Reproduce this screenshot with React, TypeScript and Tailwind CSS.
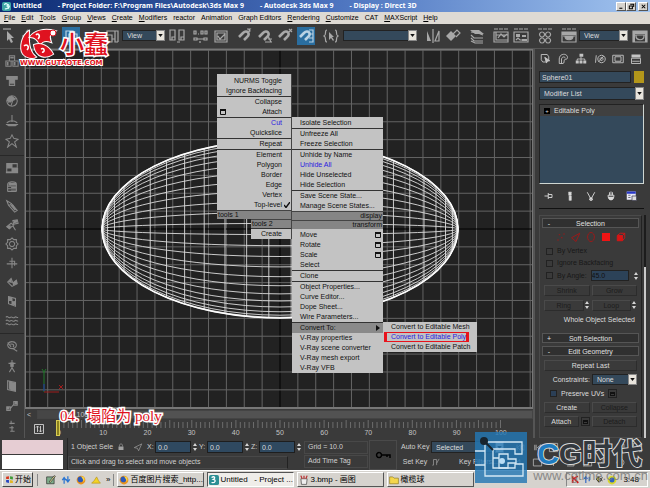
import React from 'react';
import clsx from 'clsx';

type MenuRow = { label: string; mark?: 'box' | 'check' | 'arrow'; active?: boolean; blue?: boolean; line?: boolean };

const menuBar = ['File', 'Edit', 'Tools', 'Group', 'Views', 'Create', 'Modifiers', 'reactor', 'Animation', 'Graph Editors', 'Rendering', 'Customize', 'CAT', 'MAXScript', 'Help'];
const noMnemonic = ['reactor', 'Animation', 'Graph Editors', 'CAT'];

const toolsMenu: MenuRow[] = [
  { label: 'NURMS Toggle' },
  { label: 'Ignore Backfacing' },
  { label: 'Collapse', line: true },
  { label: 'Attach', mark: 'box' },
  { label: 'Cut', line: true, blue: true },
  { label: 'Quickslice' },
  { label: 'Repeat', line: true },
  { label: 'Element', line: true },
  { label: 'Polygon' },
  { label: 'Border' },
  { label: 'Edge' },
  { label: 'Vertex' },
  { label: 'Top-level', mark: 'check' },
];

const displayMenu: MenuRow[] = [
  { label: 'Isolate Selection' },
  { label: 'Unfreeze All', line: true },
  { label: 'Freeze Selection' },
  { label: 'Unhide by Name', line: true },
  { label: 'Unhide All', blue: true },
  { label: 'Hide Unselected' },
  { label: 'Hide Selection' },
  { label: 'Save Scene State...', line: true },
  { label: 'Manage Scene States...' },
];

const transformMenu: MenuRow[] = [
  { label: 'Move', mark: 'box' },
  { label: 'Rotate', mark: 'box' },
  { label: 'Scale', mark: 'box' },
  { label: 'Select' },
  { label: 'Clone', line: true },
  { label: 'Object Properties...', line: true },
  { label: 'Curve Editor...' },
  { label: 'Dope Sheet...' },
  { label: 'Wire Parameters...' },
  { label: 'Convert To:', line: true, mark: 'arrow', active: true },
  { label: 'V-Ray properties' },
  { label: 'V-Ray scene converter' },
  { label: 'V-Ray mesh export' },
  { label: 'V-Ray VFB' },
];

// All icons are drawn in a 16 x 16 box
const Icon = ({ d, fill, thick, className = 'size-4 text-[#b4b4b4]' }: { d: string; fill?: string; thick?: string; className?: string }) => (
  <svg viewBox="0 0 16 16" className={className} fill="none" stroke="currentColor" strokeWidth="1.2" aria-hidden="true">
    <path d={d} />
    {fill && <path d={fill} fill="currentColor" stroke="none" />}
    {thick && <path d={thick} strokeWidth="2.6" />}
  </svg>
);

const dash = 'M1 1h4M6 1h4M11 1h4';
const magnet = 'M2 9l4-4c4-4 8 1 4 4l-3 3';

const Tool = ({ label, d, fill, thick, className, on }: { label: string; d: string; fill?: string; thick?: string; className?: string; on?: boolean }) => (
  <button
    aria-label={label}
    className={clsx('flex shrink-0 items-center justify-center', on ? 'h-[18px] w-[18px] bg-[#2a6ea0]' : 'h-[18px] w-4', className)}
  >
    <Icon d={d} fill={fill} thick={thick} className={on ? 'size-4 text-[#b9d2e4]' : 'size-4 text-[#a8a8a8]'} />
  </button>
);

const Dropdown = ({ label, value, className }: { label: string; value: string; className?: string }) => (
  <div className={clsx('relative shrink-0', className)}>
    <select aria-label={label} className="block h-full w-full appearance-none border border-[#222] bg-[#34495b] pl-1 text-[7px] leading-[9px] text-[#dcdcdc]">
      <option>{value}</option>
    </select>
    <span className="pointer-events-none absolute inset-y-0 right-0 flex w-[9px] items-center justify-center border border-[#888] bg-[#e8e4dc]">
      <svg viewBox="0 0 6 4" className="h-[3px] w-[5px]"><path d="M0 0h6L3 4z" fill="#111" /></svg>
    </span>
  </div>
);

const Spinner = () => (
  <svg viewBox="0 0 6 10" className="h-[10px] w-[6px] shrink-0" aria-hidden="true">
    <path d="M1 4l2-3 2 3zM1 6l2 3 2-3z" fill="#d5d5d5" />
  </svg>
);

const TitleBar = () => (
  <header className="flex h-3 items-center bg-linear-to-r from-[#0c2a72] via-[#4a71bd] to-[#a2c4ef] font-['Noto_Sans'] text-[7px] leading-3 font-bold whitespace-pre text-white">
    <svg viewBox="0 0 16 16" className="mx-0.5 size-[9px]">
      <rect width="16" height="16" rx="3" fill="#3fa5a5" />
      <path d="M4 5c3-4 8-1 5 2 4 1 2 6-4 5M11 4l2 4-2 4" stroke="#e4ffff" strokeWidth="2" fill="none" />
    </svg>
    <span>Untitled</span>
    <span className="ml-4">- Project Folder: F:\Program Files\Autodesk\3ds Max 9</span>
    <span className="ml-4">- Autodesk 3ds Max 9</span>
    <span className="ml-4">- Display : Direct 3D</span>
    <div className="mr-0.5 ml-auto flex">
      {[['Minimize', 'M3 12h7'], ['Restore', 'M5 3h8v6M3 7h7v6H3z'], ['Close', 'M4 4l8 8M12 4l-8 8']].map(([name, d], i) => (
        <button key={name} aria-label={name} className={clsx('flex h-[9px] w-[10px] items-center justify-center border border-t-white border-l-white border-r-[#555] border-b-[#555] bg-[#d6d3ce]', i === 2 && 'ml-0.5')}>
          <svg viewBox="0 0 16 16" className="size-[7px]"><path d={d} stroke="#000" strokeWidth="2.4" fill="none" /></svg>
        </button>
      ))}
    </div>
  </header>
);

const Toolbar = () => (
  <div className="flex h-[25px] items-center border-b border-[#555] bg-[#3a3a3a] pb-px pl-0.5">
    <Tool label="Select" d="M1 1h8" fill="M5 3v10l2-2 2 4 2-1-2-4h3z" />
    <Tool label="Move" className="ml-0.5" d="M8 2v12M2 8h12M6 4l2-2 2 2M6 12l2 2 2-2" />
    <Tool label="Rotate" className="ml-0.5" d="M12 4a5 5 0 1 0 1 6M12 1v4H8" />
    <Tool label="Scale" className="ml-2" on d="M3 3h7v10H3zM6 6h8v7H6z" />
    <Tool label="Use Center" className="ml-6" d="M3 6V3h11v11M1 7h7v7H1zM11 3v11h3M8 11h3" />
    <Dropdown label="Reference coordinate system" value="View" className="ml-0.5 h-[11px] w-[43px]" />
    <Tool label="Pivot center" className="ml-1" d="M1 2h5v10H1zM10 2h5v10h-5zM3 12v-3h3M8 14h3M12 12v-3h3" />
    <Tool label="Manipulate" className="ml-2" d="M1 3h2v3H1zM5 6h1M8 3h2v3H8zM12 3h2v3h-2zM1 10h3v2H1zM4 11h7M11 10h3v2h-3zM7 13v2" />
    <Tool label="Keyboard override" className="ml-1" d="M2 3h12v11H2zM4 5h8v7H4zM5 8l2 3 5-5" />
    <Tool label="Snap toggle" className="ml-2" thick={magnet} d="M10 1h3l-1 1 1 1-3 2" />
    <Tool label="Angle snap" className="ml-1" thick={magnet} d="M8 14h7M14 14l-3-6M11 11h4" />
    <Tool label="Percent snap" className="ml-1" thick={magnet} d="M12 1l3 3M15 1l-3 3" />
    <Tool label="Spinner snap" className="ml-1" on thick={magnet} d="M11 2h4v12h-4M11 6h4M11 10h4" />
    <Tool label="Named selections" className="ml-2" d="M4 2c-3 0 0 5-3 6 3 1 0 6 3 6M12 2c3 0 0 5 3 6-3 1 0 6-3 6" fill="M6 4v8l2-2 2 3 1-1-2-3h2z" />
    <Dropdown label="Named selection sets" value="" className="ml-1 h-[11px] w-[74px]" />
    <Tool label="Mirror" className="ml-2" d="M8 1v14M14 3v10h-4z" fill="M2 3l4 10H2z" />
    <Tool label="Align" className="ml-1" d="M8 6l4-4 3 3-4 4" fill="M1 8l5-5 5 5-5 5z" />
    <Tool label="Layers" className="ml-2" d="M2 4l7 1 5 2M2 7l3 3 9 0M2 10l3 3 9 0M2 13l4 2h8" fill="M1 2h9l5 4H6z" />
    <Tool label="Curve editor" className="ml-2" d={dash + 'M1 4h14v10H1zM3 4v8h12M5 10l3-4 3 3 3-3M3 7h12'} />
    <Tool label="Schematic view" className="ml-1" d={dash + 'M1 4h14v10H1zM3 12l2-2 2 2h4'} fill="M3 6h4v3H3zM9 7h4v2H9zM9 11h5v2H9z" />
    <Tool label="Material editor" className="ml-2" d={dash + 'M5 4a2.500 2.500 0 1 0 .1 0M11 4a2.500 2.500 0 1 0 .1 0M5 10a2.500 2.500 0 1 0 .1 0M11 10a2.500 2.500 0 1 0 .1 0'} />
    <Tool label="Render scene" className="ml-2" d={dash + 'M1 4h14v10H1zM4 8c0 5 8 5 8 0M2 8h12'} fill="M1 4h14v3H1zM4 8h8c0 5-8 5-8 0z" />
    <Dropdown label="Render view" value="View" className="ml-0.5 h-[11px] w-[49px]" />
    <Tool label="Quick render" className="ml-1" d="M1 3h14v11H1zM4 7h8v1c0 5-8 5-8 0zM2 7h12" fill="M1 3h14v3H1zM1 3h2v11H1zM13 3h2v11h-2z" />
  </div>
);

const sideGroups: { cls: string; icons: [string, string, string?][] }[] = [
  {
    cls: 'h-5',
    icons: [
      ['Objects', 'M5 2h6v6H5zM1 8h6v6H1zM9 8h6v6H9z', 'M6 3h4v2H6zM2 9h2v4H2zM10 9h2v4h-2z'],
      ['Cloth', 'M2 3h12v3h-3v7H5V6H2z', 'M2 3h12v3h-3v5H5V6H2z'],
      ['Deform', 'M8 2a6 6 0 1 0 .1 0M4 10c0-4 7-1 8-5M7 13l2-6', 'M8 2a6 6 0 0 0-6 6l4 2 6-5z'],
      ['Plane', 'M8 1v8M2 10c4-3 8-3 12 0M1 12h14', 'M1 12h14l-3 2H4z'],
      ['Rag doll', 'M8 1l2 4 5 1-4 3 2 6-5-4-5 4 2-6-4-3 5-1z'],
    ],
  },
  {
    cls: 'h-[19px]',
    icons: [
      ['Checker', 'M2 3h12v10H2zM8 3v10M2 8h12', 'M2 3h6v5H2zM8 8h7v6H8zM1 12h14v2H1z'],
      ['Spring', 'M3 5c0-4 10-4 10 0M3 5v8M13 5v8M3 7h10M3 10h10M3 13h10M6 3v3', 'M4 3h9v3H4zM7 8h6v1H7zM7 11h6v1H7z'],
      ['Dashpot', 'M2 2l5 3 7 8-3 2-7-8zM5 7l3-2', 'M6 7l3-1 4 6-2 1z'],
      ['Motor', 'M2 10l5-4 3 2-5 4zM9 3l5-1 1 4-5 1zM9 9l3 5', 'M2 10l4-2 1 3-2 2zM10 3l4-1 0 3-4 1z'],
      ['Wheel', 'M8 1l2 2 3 0 0 3 2 2-2 2 0 3-3 0-2 2-2-2-3 0 0-3-2-2 2-2 0-3 3 0zM8 5a3 3 0 1 0 .1 0'],
      ['Wind', 'M8 2v12M2 9h12M5 6h6v5'],
      ['Fracture', 'M3 8l4-4 2 5 4-3 1 4-6 3z', 'M3 8l4-4 1 5zM9 9l4-3 1 4-5 2z'],
      ['Flag', 'M4 3l8 2v9l-8-3zM4 6l8 3M8 4v9', 'M4 3l4 1v4l-4-2zM8 8l4 1v4l-4-1z'],
      ['Water', 'M1 5c2-3 3 2 5 0s3 2 5 0 2 1 4 0M1 9c2-3 3 2 5 0s3 2 5 0 2 1 4 0M1 13c2-3 3 2 5 0s3 2 5 0 2 1 4 0'],
    ],
  },
  {
    cls: 'h-5',
    icons: [
      ['Constraint', 'M8 3a5 4 0 1 0 .1 0M6 6c4-1 5 2 3 3M9 11l5 3M3 4l4 5'],
      ['Ragdoll', 'M8 1v3M4 5h8M8 4v6M8 10l-3 5M8 10l3 5', 'M6 4h4v5H6z'],
      ['Solver', 'M3 2l9 2v10l-9-2zM5 3v8', 'M5 3l7 1v10l-7-2z'],
      ['Preview', 'M2 9h4v4H2zM6 11l4-5M10 3h4v4h-4zM11 5h2', 'M2 9h3v3H2zM11 3h3v3h-3z'],
      ['Utilities', 'M7 2v4M5 5h6M8 8v6M5 10h5M6 14h5'],
    ],
  },
];

const SideBar = () => (
  <nav className="flex w-[25px] shrink-0 flex-col items-center border-r border-[#555] bg-[#3a3a3a] pt-0.5">
    {sideGroups.map((group, i) => (
      <div key={i} className={clsx('flex w-full flex-col items-center', i > 0 && 'mt-1 border-t border-[#282828] pt-0.5')}>
        {group.icons.map(([name, d, fill]) => (
          <button key={name} aria-label={name} className={clsx('flex items-center', group.cls)}>
            <Icon d={d} fill={fill} className="size-[14px] text-[#888]" />
          </button>
        ))}
      </div>
    ))}
  </nav>
);

// Ellipsoid wireframe: 50 segments, poles on the x axis
const CX = 254;
const CY = 179;
const RX = 178;
const RY = 89;
const STEP = Math.PI / 25;
const GRID = 17.87;

const latitudes = Array.from({ length: 24 }, (_, i) => {
  const a = (i + 1) * STEP;
  return { x: CX - RX * Math.cos(a), h: RY * Math.sin(a) };
});
const meridians = Array.from({ length: 13 }, (_, i) => RY * Math.sin(STEP / 2 + i * STEP));

const Wireframe = () => (
  <svg viewBox="0 0 506 357" preserveAspectRatio="xMidYMid slice" className="absolute inset-0 h-full w-full" fill="none">
    <g stroke="#646464">
      {Array.from({ length: 29 }, (_, i) => i - 14).map((i) => (
        <path key={'v' + i} d={`M${CX + i * GRID} 0v357`} stroke={i === 0 ? '#000' : undefined} />
      ))}
      {Array.from({ length: 20 }, (_, i) => i - 10).map((i) => (
        <path key={'h' + i} d={`M0 ${CY + i * GRID}h506`} stroke={i === 0 ? '#000' : undefined} />
      ))}
    </g>
    <g stroke="#dcdcdc" strokeWidth="0.9">
      {latitudes.map((l) => <path key={l.x} d={`M${l.x} ${CY - l.h}v${2 * l.h}`} />)}
      {meridians.map((r) => <ellipse key={r} cx={CX} cy={CY} rx={RX} ry={r} />)}
    </g>
    <ellipse cx={CX} cy={CY} rx={RX} ry={RY} stroke="#fff" strokeWidth="1.4" />
    <path d="M18 342v-20M16 319l2 3 2-3" stroke="#1f7a2a" />
    <path d="M18 342h15M33 335l4 4M37 335l-4 4" stroke="#a01c1c" />
    <path d="M18 334v7" stroke="#2233b0" />
  </svg>
);

const Mark = ({ kind }: { kind: 'box' | 'check' | 'arrow' }) => (
  <svg viewBox="0 0 6 6" className="size-[6px] shrink-0" aria-hidden="true">
    {kind === 'box' && <path d="M.5 1h5v4.500h-5z" fill="none" stroke="#111" />}
    {kind === 'box' && <path d="M0 0h6v2H0z" fill="#111" />}
    {kind === 'check' && <path d="M0 3l2 2.500L6 0" fill="none" stroke="#111" strokeWidth="1.400" />}
    {kind === 'arrow' && <path d="M1 0l4 3-4 3z" fill="#111" />}
  </svg>
);

const Rows = ({ rows, right }: { rows: MenuRow[]; right?: boolean }) => (
  <>
    {rows.map((row) => (
      <button
        key={row.label}
        role="menuitem"
        className={clsx(
          'box-content flex h-[10px] items-center text-[7px] leading-[10px] whitespace-nowrap',
          right ? 'flex-row-reverse gap-0.5 pr-px pl-[3px]' : 'pr-0.5 pl-2',
          row.line && 'border-t border-[#333]',
          row.active && 'bg-[#8a8a8a]',
          row.blue ? 'text-[#2a20e0]' : 'text-[#111]',
        )}
      >
        {right && row.mark !== 'check' && <span className="w-[6px]" />}
        {right && row.mark === 'check' && <Mark kind="check" />}
        <span className={clsx('flex-1', right ? 'text-right' : 'text-left')}>{row.label}</span>
        {row.mark && row.mark !== 'check' && <Mark kind={row.mark} />}
      </button>
    ))}
  </>
);

const quadTitle = 'h-[9px] border-t border-[#444] bg-[#858585] px-px text-[7px] leading-[8px] text-[#111]';

const QuadMenu = () => (
  <div className="absolute top-6 left-[191px] flex items-start" role="menu">
    <div className="flex w-[75px] flex-col items-end border-r border-[#444]">
      <div className="flex w-full flex-col bg-[#c3c3c3] pt-0.5">
        <Rows rows={toolsMenu} right />
        <div className={quadTitle}>tools 1</div>
      </div>
      <div className="flex w-10 flex-col bg-[#c3c3c3]">
        <div className={quadTitle}>tools 2</div>
        <Rows rows={[{ label: 'Create', line: true }]} right />
      </div>
    </div>
    <div className="mt-[43px] flex w-[91px] flex-col bg-[#c3c3c3] pt-px">
      <Rows rows={displayMenu} />
      <div className={clsx(quadTitle, 'text-right')}>display</div>
      <div className={clsx(quadTitle, 'mb-px text-right')}>transform</div>
      <Rows rows={transformMenu} />
    </div>
    <div className="mt-[248px] flex w-[94px] flex-col bg-[#c3c3c3] text-[7px] leading-[10px] text-[#111]" role="menu">
      <button role="menuitem" className="h-[10px] pl-2 text-left whitespace-nowrap">Convert to Editable Mesh</button>
      <button role="menuitem" className="mr-2 ml-px h-[10px] border-x-[3px] border-y border-[#e8131c] pl-1 text-left leading-[8px] whitespace-nowrap text-[#2a20e0]">Convert to Editable Poly</button>
      <button role="menuitem" className="h-[10px] pl-2 text-left whitespace-nowrap">Convert to Editable Patch</button>
    </div>
  </div>
);

const TimeLine = () => (
  <div className="bg-[#3a3a3a] text-[#c4c4c4]">
    <div className="flex h-3 items-center gap-1 border-t border-[#777] text-[7px]">
      <button className="w-2 text-center leading-[10px]">&lt;</button>
      <div className="h-[9px] flex-1 border border-[#444] bg-[#525252]">
        <div className="h-full w-[80px] border-r border-[#333] bg-[#464646] text-center leading-[8px]">0 / 100</div>
      </div>
    </div>
    <div className="flex h-[18px] text-[7px]">
      <button aria-label="Open mini curve editor" className="ml-2 flex w-3 items-center">
        <Icon d="M2 2h12v12H2zM6 12V4M4 6l2-2 2 2M10 4v8M8 10l2 2 2-2" className="size-3 text-[#d0d0d0]" />
      </button>
      <div className="relative ml-[14px] flex-1 pr-8">
        <span className="absolute top-0 -left-[3px] h-4 w-1 border border-[#d8cc50] bg-[#8a8120]" />
        <svg viewBox="0 0 442 8" preserveAspectRatio="none" className="h-2 w-full">
          <path d={Array.from({ length: 101 }, (_, i) => `M${i * 4.41 + 0.5} ${i % 5 ? 2 : 0}V8`).join('')} stroke="#6d6d6d" />
        </svg>
        <div className="flex justify-between leading-[9px]">
          {Array.from({ length: 11 }, (_, i) => (
            <span key={i} className="flex w-0 justify-center">{i * 10}</span>
          ))}
        </div>
      </div>
    </div>
  </div>
);

const Rollout = ({ open, children }: { open?: boolean; children: React.ReactNode }) => (
  <button className="grid h-[10px] w-full grid-cols-[12px_1fr_12px] items-center border border-[#555] bg-[#303030] text-center text-[#e0e0e0]">
    <span>{open ? '-' : '+'}</span>
    <span>{children}</span>
  </button>
);

const PanelButton = ({ children, off, className }: { children: React.ReactNode; off?: boolean; className?: string }) => (
  <button disabled={off} className={clsx('h-[11px] border border-t-[#4a4a4a] border-l-[#4a4a4a] border-r-[#2c2c2c] border-b-[#2c2c2c] text-center leading-[9px]', off ? 'text-[#1c1c1c]' : 'text-[#dcdcdc]', className)}>
    {children}
  </button>
);

const Check = ({ id, children, off, blue }: { id: string; children: React.ReactNode; off?: boolean; blue?: boolean }) => (
  <div className="flex items-center gap-1">
    <input id={id} type="checkbox" disabled={off} className={clsx('size-[7px] appearance-none border border-[#222]', blue ? 'bg-[#2b3f56]' : 'bg-[#3a3a3a]')} />
    <label htmlFor={id} className={off ? 'text-[#181818]' : 'text-[#dcdcdc]'}>{children}</label>
  </div>
);

const Square = () => (
  <button aria-label="Settings" className="flex size-[9px] items-center justify-center border border-[#222]">
    <span className="h-1 w-[5px] border border-t-2 border-[#111]" />
  </button>
);

const CommandPanel = () => (
  <aside className="flex w-[117px] shrink-0 flex-col border-l-2 border-[#555] bg-[#3a3a3a] pt-0.5 pr-1.5 pl-1 text-[7px] leading-[10px] text-[#dcdcdc]">
    <div className="flex h-4 items-center justify-between pr-0.5">
      {[
        ['Create', 'M3 2h8l2 3v5l-2 2H5L3 9zM8 6l2 7 1-3 3 0z', 'M7 5l3 9 1-3 4 0z'],
        ['Modify', 'M3 14V8c0-8 11-8 11-2 0 3-3 2-4 3s0 5-2 5zM6 14V8c1-4 5-3 5-1', ''],
        ['Hierarchy', 'M8 5v5M3 10V8h10v2', 'M6 1h5v4H6zM1 10h4v4H1zM6 10h4v4H6zM11 10h4v4h-4z'],
        ['Motion', 'M10 3a5 5 0 1 0 .1 0M10 6a2 2 0 1 0 .1 0M3 3L2 13M6 12l7-8', ''],
        ['Display', 'M1 3h14v10H1zM4 5h8v6H4z', ''],
        ['Utilities', 'M2 7h12v7H2zM3 11h10', 'M2 2h12v4H2z'],
      ].map(([name, d, fill]) => (
        <button key={name} aria-label={name}><Icon d={d} fill={fill} className="size-3 text-[#c4c4c4]" /></button>
      ))}
    </div>
    <div className="mt-1 flex items-center gap-[3px]">
      <input aria-label="Object name" defaultValue="Sphere01" className="h-3 w-0 flex-1 border border-[#222] bg-[#34495b] pl-0.5 text-[#dcdcdc]" />
      <button aria-label="Object color" className="h-3 w-[10px] bg-[#b3961a]" />
    </div>
    <Dropdown label="Modifiers" value="Modifier List" className="mt-1 h-[13px]" />
    <div className="mt-1 h-20 border border-t-[#222] border-l-[#222] border-r-[#cfd6d2] border-b-[#cfd6d2] bg-[#34495b]">
      <div className="flex h-[11px] items-center gap-1 bg-[#404040] pl-1">
        <span className="flex size-[6px] items-center justify-center bg-black text-[6px] leading-[6px]">+</span>
        Editable Poly
      </div>
    </div>
    <div className="flex h-6 items-center justify-between px-1 pr-1.5">
      {[
        ['Pin stack', 'M2 8h5M7 4v8M7 6h5v4H7', ''],
        ['Show end result', 'M7 3v11M9 6v8M6 3h4', 'M6 3h4v4H6zM7 8h3v6H7z'],
        ['Make unique', 'M3 3l5 9 5-9M6 12a2 2 0 1 0 4 0', 'M6 10h4v3H6z'],
        ['Remove modifier', 'M4 7c0 8 8 8 8 0M4 7h8M6 7V3M8 7V2M10 7V3', 'M4 9h8c0 6-8 6-8 0z'],
      ].map(([name, d, fill]) => (
        <button key={name} aria-label={name}><Icon d={d} fill={fill} className="size-3 text-[#dadada]" /></button>
      ))}
      <button aria-label="Configure sets">
        <svg viewBox="0 0 16 16" className="size-3">
          <path d="M1 2h12v11H1z" fill="#e8e8f4" />
          <path d="M1 2h12v3H1z" fill="#2636c8" />
          <path d="M8 8h6v6H8zM3 7h3M3 10h3" stroke="#445" fill="#ddd" />
        </svg>
      </button>
    </div>
    <hr className="border-[#111]" />
    <div className="-mr-0.5 mt-[6px] flex flex-1 gap-0.5">
      <div className="flex flex-1 flex-col border border-[#4a4a4a] border-r-[#222] p-0.5">
        <Rollout open>Selection</Rollout>
        <div className="mt-[3px] flex h-3 items-center justify-center gap-[3px]">
          {['M3 12h2M8 9h2M11 4h2M5 5h2', 'M2 9l11-6-5 11z', 'M8 2c6 0 6 12 0 12S2 2 8 2z'].map((d) => (
            <button key={d} aria-label="Sub-object level"><Icon d={d} className="size-3 text-[#a51515]" /></button>
          ))}
          <button aria-label="Polygon" className="mx-0.5 size-2 bg-[#f01414]" />
          <button aria-label="Element"><Icon d="M3 6l4-3h6v6l-3 4H3zM3 6h7v7M10 6l3-3" fill="M3 6h7v7H3z" className="size-3 text-[#d81414]" /></button>
        </div>
        <div className="mt-[3px] flex flex-col gap-0.5 pl-1">
          <Check id="by-vertex" off>By Vertex</Check>
          <Check id="ignore" off>Ignore Backfacing</Check>
          <div className="flex items-center gap-1">
            <Check id="by-angle" off>By Angle:</Check>
            <input aria-label="Angle" disabled defaultValue="45.0" className="h-[11px] w-0 flex-1 border border-[#222] bg-[#2c4258] text-[#111]" />
            <Spinner />
          </div>
        </div>
        <div className="mt-1 grid grid-cols-2 gap-x-0.5 gap-y-1 px-0.5">
          <PanelButton off>Shrink</PanelButton>
          <PanelButton off>Grow</PanelButton>
          <div className="flex"><PanelButton off className="flex-1">Ring</PanelButton><Spinner /></div>
          <div className="flex"><PanelButton off className="flex-1">Loop</PanelButton><Spinner /></div>
        </div>
        <p className="mt-1 pr-1 text-right">Whole Object Selected</p>
        <div className="mt-2 flex flex-col gap-[3px]">
          <Rollout>Soft Selection</Rollout>
          <Rollout open>Edit Geometry</Rollout>
        </div>
        <div className="flex flex-col gap-[3px] px-0.5 pt-1">
          <PanelButton>Repeat Last</PanelButton>
          <div className="flex items-center justify-end gap-0.5">
            <span>Constraints:</span>
            <Dropdown label="Constraints" value="None" className="h-[11px] w-[45px]" />
          </div>
          <div className="flex h-[11px] items-center gap-1 pl-1.5">
            <Check id="uvs" blue>Preserve UVs</Check>
            <Square />
          </div>
          <div className="grid grid-cols-2 gap-x-0.5 gap-y-[3px]">
            <PanelButton>Create</PanelButton>
            <PanelButton off>Collapse</PanelButton>
            <div className="flex items-center gap-0.5"><PanelButton className="flex-1">Attach</PanelButton><Square /></div>
            <PanelButton off>Detach</PanelButton>
          </div>
        </div>
      </div>
      <div className="flex w-0.5 flex-col bg-[#1c1c1c]">
        <span className="mt-[52px] flex-1 bg-[#c9c9c9]" />
      </div>
    </div>
  </aside>
);

const Coord = ({ axis }: { axis: string }) => (
  <div className="flex items-center gap-px">
    <label htmlFor={'axis-' + axis} className="w-[7px]">{axis}:</label>
    <input id={'axis-' + axis} defaultValue="0.0" className="h-3 w-[36px] border border-[#1e1e1e] bg-[#2f4960] pl-0.5 text-[#dcdcdc]" />
    <Spinner />
  </div>
);

const StatusBar = () => (
  <div className="flex h-8 bg-[#3a3a3a] text-[7px] leading-[10px] text-[#d0d0d0]">
    <div className="mt-0.5 ml-0.5 flex w-[61px] shrink-0 flex-col gap-px">
      <div className="h-[14px] bg-[#e6cdd3]" />
      <div className="h-[14px] bg-white" />
    </div>
    <div className="ml-1 flex w-[237px] shrink-0 flex-col border-l border-[#252525]">
      <div className="flex h-[18px] items-center pl-[3px]">
        <span className="whitespace-nowrap">1 Object Sele</span>
        <Icon d="M5 7V4c0-3 6-3 6 0v3" fill="M3 7h10v7H3z" className="ml-1 size-2 text-[#a0a0a0]" />
        <Icon d="M2 9l12-6-5 11-2-4z" className="mr-1 ml-2 size-[10px] text-[#999]" />
        <div className="ml-auto flex gap-px pr-0.5">
          <Coord axis="X" />
          <Coord axis="Y" />
          <Coord axis="Z" />
        </div>
      </div>
      <div className="mr-4 h-[13px] border border-[#484848] border-r-[#222] pl-0.5">Click and drag to select and move objects</div>
    </div>
    <div className="flex w-[64px] shrink-0 flex-col gap-px pt-[3px]">
      <div className="h-[13px] border border-[#484848] pl-[3px]">Grid = 10.0</div>
      <div className="h-[13px] border border-[#484848] pl-[3px]">Add Time Tag</div>
    </div>
    <button aria-label="Set keys" className="mt-0.5 ml-px flex w-7 shrink-0 items-center justify-center border border-[#4a4a4a]">
      <svg viewBox="0 0 16 8" className="h-2 w-4"><path d="M4 1.500a2.500 2.500 0 1 0 .1 0M6 4h9v3M12 4v2" fill="none" stroke="#000" strokeWidth="1.500" /></svg>
    </button>
    <div className="ml-1 flex shrink-0 flex-col gap-1 pt-[3px]">
      <div className="flex items-center gap-0.5">
        <button className="w-7 whitespace-nowrap">Auto Key</button>
        <Dropdown label="Key selection" value="Selected" className="h-3 w-[73px]" />
      </div>
      <div className="flex items-center gap-0.5">
        <button className="w-7 whitespace-nowrap">Set Key</button>
        <Icon d="M2 13h2V4h5v9M9 10l4-7" className="size-[10px] text-[#999]" />
        <button className="ml-4 whitespace-nowrap">Key Filters...</button>
      </div>
    </div>
    <div className="ml-2 grid flex-1 grid-cols-8 items-center justify-items-center pt-0.5 pr-1">
      {[
        'M3 4v8M13 4v8L8 8zM8 4v8L4 8z', 'M13 4v8L8 8zM4 4v8M6 4v8', 'M2 2h12v12H2zM6 5v6l5-3z', 'M3 4v8l5-4zM10 4v8M12 4v8', 'M8 4v8l4-4zM3 4v8l5-4zM13 4v8', 'M6 2a4 4 0 1 0 .1 0M10 10l4 4', 'M3 3h10v10H3zM6 6h4v4H6z', 'M2 6V2h4M10 2h4v4M14 10v4h-4M6 14H2v-4',
        'M2 8l5-4v8z', 'M2 3h12v10H2z', 'M3 8h10M8 3v10', 'M3 3h10v10H3M8 5v4h3', 'M2 13L14 3v10z', 'M4 7v5h8V5M6 7V3M9 7V2', 'M8 3a5 5 0 1 0 .1 0M8 1v4', 'M2 2h6v6H2zM8 8h6v6H8z',
      ].map((d, i) => (
        <button key={i} aria-label={'Playback and view control ' + (i + 1)}><Icon d={d} className="size-[11px] text-[#b4b4b4]" /></button>
      ))}
    </div>
  </div>
);

const Firefox = () => (
  <svg viewBox="0 0 16 16" className="size-[10px] shrink-0">
    <circle cx="8" cy="8" r="7" fill="#e8921c" />
    <circle cx="7" cy="7" r="4.500" fill="#2b57b8" />
    <path d="M8 2c6 0 7 6 4 9 0-4-2-5-4-9z" fill="#f7d545" />
  </svg>
);

const TaskButton = ({ icon, active, children }: { icon: React.ReactNode; active?: boolean; children: React.ReactNode }) => (
  <button
    className={clsx(
      'flex h-[15px] w-[87px] shrink-0 items-center gap-px border px-px text-[8px] leading-[12px] whitespace-pre text-black',
      active ? 'border-t-[#555] border-l-[#555] border-r-white border-b-white bg-[#efede9]' : 'border-t-white border-l-white border-r-[#555] border-b-[#555]',
    )}
  >
    {icon}
    <span>{children}</span>
  </button>
);

const TaskBar = () => (
  <footer className="flex h-[18px] items-center border-t border-white bg-[#d6d3ce] text-[8px] text-black">
    <button className="ml-0.5 flex h-[15px] w-[31px] items-center gap-px border border-t-white border-l-white border-r-[#444] border-b-[#444] pl-0.5 leading-[12px] whitespace-nowrap">
      <svg viewBox="0 0 16 16" className="size-[9px] shrink-0">
        <path d="M2 3l5-1v5H2z" fill="#d8341c" /><path d="M9 2l5 1v5l-5-1z" fill="#3c9a35" />
        <path d="M2 9h5v5l-5-1z" fill="#2444c0" /><path d="M9 9l5 1v4H9z" fill="#e2b722" />
      </svg>
      开始
    </button>
    <span className="mx-1 h-3 w-px bg-[#888]" />
    <div className="flex items-center gap-[5px] pl-1">
      <svg viewBox="0 0 16 16" className="size-[10px]"><path d="M1 3h12v11H1z" fill="#7fae8b" stroke="#222" /><path d="M5 11l8-10 2 1-8 10z" fill="#e8e0a0" stroke="#222" /></svg>
      <svg viewBox="0 0 16 16" className="size-[10px]"><path d="M5 14V5M2 8l3-4 3 4M11 2v8M8 7l3 4 3-4" stroke="#2a74d0" strokeWidth="2" fill="none" /></svg>
      <Firefox />
      <svg viewBox="0 0 16 16" className="size-[10px]"><path d="M1 13h14l-3-4-3-6-4 6z" fill="#f3d326" stroke="#b38d10" /></svg>
      <span className="leading-[10px]">»</span>
    </div>
    <span className="mx-[3px] h-3 w-px bg-[#888]" />
    <div className="flex gap-[3px]">
      <TaskButton icon={<Firefox />}>百度图片搜索_http...</TaskButton>
      <TaskButton active icon={<svg viewBox="0 0 16 16" className="size-[10px] shrink-0"><rect width="16" height="16" rx="3" fill="#2c8f94" /><path d="M4 4c5-3 7 1 3 3 5 1 3 6-3 5" stroke="#fff" strokeWidth="2" fill="none" /></svg>}>{'Untitled   - Project ...'}</TaskButton>
      <TaskButton icon={<svg viewBox="0 0 16 16" className="size-[10px] shrink-0"><path d="M3 6h10l-1 9H4z" fill="#eee" stroke="#333" /><path d="M5 6L3 1M8 6V1M11 6l2-5" stroke="#b33" strokeWidth="2" /></svg>}>3.bmp - 画图</TaskButton>
      <TaskButton icon={<svg viewBox="0 0 16 16" className="size-[10px] shrink-0"><path d="M1 3h5l2 2h7v9H1z" fill="#f4d64c" stroke="#8a7412" /></svg>}>橄榄球</TaskButton>
    </div>
    <div className="mr-0.5 ml-auto flex h-[15px] w-[82px] items-center gap-[3px] border border-t-[#888] border-l-[#888] border-r-white border-b-white pl-1">
      <svg viewBox="0 0 16 16" className="size-[9px]"><path d="M3 2v12M3 8l9-6M6 7l7 7" stroke="#d01c1c" strokeWidth="3" /></svg>
      <svg viewBox="0 0 16 16" className="size-[9px]"><path d="M5 14V4M2 7l3-4 3 4M11 3v8" stroke="#2a64c8" strokeWidth="2" fill="none" /></svg>
      <svg viewBox="0 0 16 16" className="size-[9px]"><path d="M2 7l5-4v10zM9 5l4 6M13 4l-4 8" fill="#e8da38" stroke="#222" strokeWidth="1.500" /></svg>
      <svg viewBox="0 0 16 16" className="size-[10px]"><circle cx="8" cy="8" r="7" fill="#d8d82a" /><circle cx="8" cy="8" r="4" fill="#2e62c0" /></svg>
      <time className="ml-auto pr-2">3:48</time>
    </div>
  </footer>
);

// Red mascot with its name and address, laid over the toolbar
const TopLogo = () => (
  <div className="pointer-events-none absolute top-7 left-5 w-[90px] text-[#df1220]">
    <div className="flex h-8 items-start">
      <svg viewBox="0 0 38 30" className="h-[30px] w-[38px] overflow-visible">
        <g stroke="#fff" strokeWidth="2" fill="currentColor" paintOrder="stroke">
          <path d="M9 3C2 7-1 20 3 26c3 4 10 5 13 3-5-4-8-10-7-26z" />
          <path d="M10 9C14 3 24 0 35 3c-6 3-6 6-4 11-5-2-9-1-11 3-2-5-5-8-10-8z" />
          <path d="M14 17c8-3 15 2 19 9-7 5-17 4-19-9z" />
        </g>
        <path d="M4 18c3-3 6 1 3 4M16 7c2-3 5 1 2 4M21 21c4-2 4 4 1 3" stroke="#fff" strokeWidth="1.500" fill="none" />
        <circle cx="33" cy="5" r="3" stroke="#df1220" fill="#fff" />
      </svg>
      <span className="ml-0.5 font-['Noto_Sans_CJK_SC',sans-serif] text-[24px] leading-[29px] font-medium whitespace-nowrap [-webkit-text-stroke:3px_white] [paint-order:stroke_fill]">小蠢</span>
    </div>
    <p className="font-['DejaVu_Sans'] text-[7px] leading-[7px] font-bold whitespace-nowrap [-webkit-text-stroke:2px_white] [paint-order:stroke_fill]">WWW.GUTAOTE.COM</p>
  </div>
);

const SiteLogo = () => (
  <div className="pointer-events-none absolute right-0.5 bottom-[5px] flex items-end gap-1.5">
    <svg viewBox="0 0 52 51" className="h-[51px] w-[52px]">
      <path d="M0 0h52v51H0z" fill="#2378b4" opacity=".82" />
      <g fill="none" stroke="#d3e8f5" strokeWidth="1.300">
        <path d="M10 10h37v12h-7v-5H18v19h22v-4h8v12H10z" />
        <path d="M24 22h9v5h8v4h-8v5h-9zM0 19h10M0 33h10M24 26h-6" />
      </g>
      <circle cx="9" cy="9" r="4" fill="#18242e" />
      <path d="M9 9l9 9" stroke="#18242e" strokeWidth="2" />
      <circle cx="27" cy="29" r="3" fill="#b8ddf5" />
    </svg>
    <div className="font-['Liberation_Sans','Noto_Sans_CJK_SC',sans-serif] whitespace-nowrap">
      <p className="pl-1 text-[30px] leading-[30px] font-bold text-[#33383e] [-webkit-text-stroke:2px_#d8d8d8] [paint-order:stroke_fill]">
        <span className="text-[#1f7cc0]">C</span>G时代
      </p>
      <p className="text-[13px] leading-[14px] text-[#777] opacity-80">www.cgtime.com.cn</p>
    </div>
  </div>
);

export default function App() {
  return (
    <div className="relative flex min-h-screen flex-col overflow-hidden bg-[#3a3a3a] font-['Liberation_Sans','Noto_Sans_CJK_SC',sans-serif] select-none">
      <TitleBar />
      <nav className="flex h-3 items-center gap-1.5 bg-[#dedad4] pl-1 text-[7px] leading-3 text-black">
        {menuBar.map((item) => (
          <button key={item} className={clsx('whitespace-nowrap', !noMnemonic.includes(item) && 'first-letter:underline')}>{item}</button>
        ))}
      </nav>
      <Toolbar />
      <main className="flex flex-1">
        <SideBar />
        <div className="flex min-w-0 flex-1 flex-col">
          <section className="relative min-h-[340px] flex-1 border border-[#777] bg-[#222]">
            <Wireframe />
            <QuadMenu />
          </section>
          <TimeLine />
        </div>
        <CommandPanel />
      </main>
      <StatusBar />
      <TaskBar />
      <TopLogo />
      <p className="pointer-events-none absolute bottom-[63px] left-[60px] font-['Liberation_Serif','Noto_Sans_CJK_SC',serif] text-[15px] leading-[18px] whitespace-pre text-[#e0101c] [-webkit-text-stroke:3px_white] [paint-order:stroke_fill]">
        {'04.  塌陷为 poly'}
      </p>
      <SiteLogo />
    </div>
  );
}
